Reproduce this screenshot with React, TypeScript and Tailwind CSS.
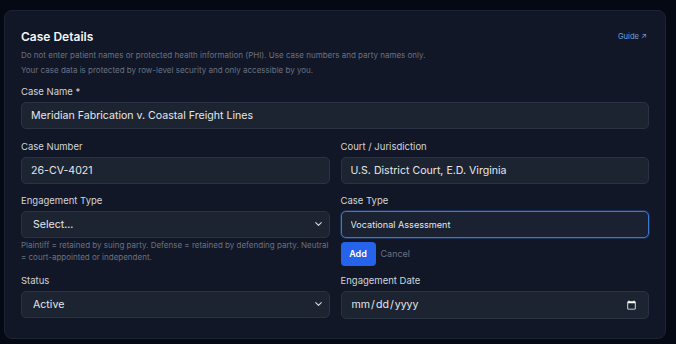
import { ChevronDown } from 'lucide-react';

const inputCls =
  'w-full h-[27px] rounded-[5px] border border-[#2a3343] bg-[#1d2431] px-[9px] text-[10.6px] text-gray-200 outline-none';

function Label({ children }: { children: React.ReactNode }) {
  return <label className="block text-[9.5px] leading-[14px] text-gray-300 mb-[2px]">{children}</label>;
}

function Select({ value }: { value: string }) {
  return (
    <div className="relative">
      <select defaultValue={value} className={`${inputCls} appearance-none pl-[11px]`}>
        <option>{value}</option>
      </select>
      <ChevronDown
        size={11}
        strokeWidth={2.5}
        className="absolute right-[6px] top-1/2 -translate-y-1/2 text-gray-300 pointer-events-none"
      />
    </div>
  );
}

export default function App() {
  return (
    <div
      className="w-[676px] h-[344px] bg-[#050914] pt-[10px] px-[4px] overflow-hidden"
      style={{ fontFamily: 'Inter, "Noto Sans", sans-serif' }}
    >
      <div className="w-[662px] rounded-[8px] border border-[#1c2333] bg-[#111726] px-[16px] pt-[17px] pb-[19px]">
        {/* Header */}
        <div className="flex items-center justify-between h-[18px]">
          <h2 className="text-[12px] font-semibold text-gray-100">Case Details</h2>
          <a className="text-[7.6px] text-[#6f9fdc] mr-[2px]">Guide ↗</a>
        </div>
        <div className="mt-[2px] text-[8px] leading-[15px] text-gray-500">
          <p>Do not enter patient names or protected health information (PHI). Use case numbers and party names only.</p>
          <p>Your case data is protected by row-level security and only accessible by you.</p>
        </div>

        <div className="mt-[7px]">
          <Label>Case Name *</Label>
          <input className={inputCls} defaultValue="Meridian Fabrication v. Coastal Freight Lines" />
        </div>

        <div className="grid grid-cols-2 gap-x-[11px] mt-[11px]">
          <div>
            <Label>Case Number</Label>
            <input className={inputCls} defaultValue="26-CV-4021" />
          </div>
          <div>
            <Label>Court / Jurisdiction</Label>
            <input className={inputCls} defaultValue="U.S. District Court, E.D. Virginia" />
          </div>
        </div>

        <div className="grid grid-cols-2 gap-x-[11px] mt-[10px]">
          <div>
            <Label>Engagement Type</Label>
            <div className="mt-[1px]">
              <Select value="Select..." />
            </div>
            <p className="mt-[1px] text-[8px] leading-[12px] text-gray-500">
              Plaintiff = retained by suing party. Defense = retained by defending party. Neutral = court-appointed or independent.
            </p>
          </div>
          <div>
            <Label>Case Type</Label>
            <input
              className="mt-[1px] w-full h-[27px] rounded-[5px] border-[1.5px] border-[#3f76cf] bg-[#1a2130] px-[9px] text-[9.1px] text-gray-200 outline-none shadow-[0_0_0_1px_rgba(59,130,246,0.25)]"
              defaultValue="Vocational Assessment"
            />
            <div className="flex items-center gap-[5px] mt-[4px]">
              <button className="h-[24px] w-[35px] rounded-[4px] bg-[#2563eb] text-[9px] font-semibold text-white">
                Add
              </button>
              <button className="text-[9px] text-gray-500">Cancel</button>
            </div>
          </div>
        </div>

        <div className="grid grid-cols-2 gap-x-[11px] mt-[8px]">
          <div>
            <Label>Status</Label>
            <div className="mt-[1px]">
              <Select value="Active" />
            </div>
          </div>
          <div>
            <Label>Engagement Date</Label>
            <input type="date" className={`${inputCls} mt-[1px] h-[28px] [color-scheme:dark]`} />
          </div>
        </div>
      </div>
    </div>
  );
}
